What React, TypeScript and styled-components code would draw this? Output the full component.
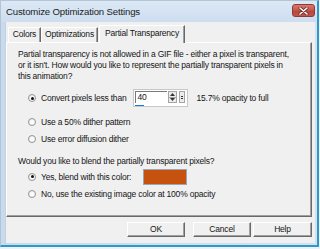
import React from 'react';
import styled, { createGlobalStyle } from 'styled-components';

const GlobalStyle = createGlobalStyle`
  html, body {
    margin: 0;
    padding: 0;
    background: #eef2f6;
  }
  * {
    box-sizing: border-box;
  }
`;

const uiFont = `"Liberation Sans", Arial, sans-serif`;

const Window = styled.div`
  width: 319px;
  height: 247px;
  display: flex;
  flex-direction: column;
  background: linear-gradient(90deg, #c9daee 0%, #d3e1f1 100%);
  border-top: 1px solid #b4c4d6;
  border-left: 1px solid #b4c4d6;
  border-right: 2px solid #2c9cc6;
  border-bottom: 2px solid #2c9cc6;
  font-family: ${uiFont};
  color: #151515;
`;

const TitleBar = styled.div`
  height: 21px;
  display: flex;
  align-items: flex-start;
  justify-content: space-between;
  padding: 0 2px 0 5px;
  background: linear-gradient(180deg, #dce8f5 0%, #cddef0 100%);
`;

const Title = styled.div`
  font-size: 9.6px;
  letter-spacing: -0.15px;
  line-height: 12px;
  margin-top: 5px;
  color: #1b1b1b;
`;

const CloseButton = styled.div`
  width: 23px;
  height: 13px;
  margin-top: 3px;
  border: 1px solid #8d3b37;
  border-radius: 3px;
  background: linear-gradient(180deg, #d8776c 0%, #c85a4e 45%, #b8463b 55%, #c0544a 100%);
  display: flex;
  align-items: center;
  justify-content: center;
`;

const Content = styled.div`
  flex: 1;
  margin: 0 2px 2px 4px;
  background: #f0f0f0;
  border-left: 1px solid #c3d2e3;
  display: flex;
  flex-direction: column;
  padding-top: 3px;
`;

const TabRow = styled.div`
  height: 17px;
  display: flex;
  align-items: flex-end;
  padding-left: 2px;
  position: relative;
  z-index: 1;
`;

const Tab = styled.div<{ $w: number; $active?: boolean }>`
  width: ${(p) => p.$w}px;
  height: ${(p) => (p.$active ? 18 : 15)}px;
  margin-bottom: ${(p) => (p.$active ? -1 : 0)}px;
  margin-left: ${(p) => (p.$active ? 1 : 0)}px;
  background: #f0f0f0;
  border-top: 1px solid #ffffff;
  border-left: 1px solid #ffffff;
  border-right: 1px solid #696969;
  box-shadow: inset -1px 0 0 #a0a0a0;
  font-size: 8.5px;
  letter-spacing: -0.2px;
  line-height: 13px;
  padding-top: ${(p) => (p.$active ? 1 : 0)}px;
  text-align: center;
  white-space: nowrap;
`;

const Panel = styled.div`
  width: 306px;
  height: 175px;
  background: #f0f0f0;
  border-top: 1px solid #ffffff;
  border-left: 1px solid #ffffff;
  border-right: 1px solid #696969;
  border-bottom: 1px solid #696969;
  box-shadow: inset -1px -1px 0 #a0a0a0;
  display: flex;
  flex-direction: column;
  font-size: 8.5px;
  letter-spacing: -0.2px;
`;

const Para = styled.div<{ $mt: number }>`
  margin-top: ${(p) => p.$mt}px;
  padding-left: 11px;
  line-height: 11px;
  white-space: nowrap;
`;

const RadioRow = styled.div<{ $mt?: number; $h?: number }>`
  display: flex;
  align-items: center;
  height: ${(p) => p.$h ?? 17}px;
  margin-top: ${(p) => p.$mt ?? 0}px;
  padding-left: 21px;
  white-space: nowrap;
`;

const Radio = styled.span<{ $on?: boolean }>`
  width: 8px;
  height: 8px;
  border-radius: 50%;
  border: 1px solid #949494;
  background: radial-gradient(circle at 60% 60%, #ffffff 0%, #f6f6f6 55%, #dadada 100%);
  display: inline-flex;
  align-items: center;
  justify-content: center;
  margin-right: 5px;
  flex-shrink: 0;

  &::after {
    content: '';
    width: 3px;
    height: 3px;
    border-radius: 50%;
    background: ${(p) => (p.$on ? '#111' : 'transparent')};
  }
`;

const SpinFrame = styled.div`
  width: 55px;
  height: 18px;
  margin-left: 7px;
  margin-right: 8px;
  border: 1px solid #c8c8c8;
  background: #ffffff;
  padding: 1px 2px 0 1px;
  display: flex;
  flex-direction: column;
`;

const SpinTop = styled.div`
  display: flex;
  height: 12px;
  gap: 1px;
`;

const SpinField = styled.div`
  flex: 1;
  border-top: 1px solid #7a7a7a;
  border-left: 1px solid #7a7a7a;
  padding-left: 1px;
  line-height: 11px;
  font-size: 8.5px;
`;

const SpinArrows = styled.div`
  width: 9px;
  display: flex;
  flex-direction: column;
`;

const ArrowBtn = styled.div`
  flex: 1;
  background: #ececec;
  border: 1px solid #a5a5a5;
  display: flex;
  align-items: center;
  justify-content: center;
  & + & {
    border-top: none;
  }
`;

const ExtraBtn = styled.div`
  width: 6px;
  margin-left: 1px;
  background: #ececec;
  border: 1px solid #a5a5a5;
  display: flex;
  flex-direction: column;
  align-items: center;
  justify-content: center;
  gap: 1px;
`;

const ExtraLine = styled.span`
  width: 2px;
  height: 1px;
  background: #333;
`;

const SpinBar = styled.div`
  width: 9px;
  height: 2px;
  margin-top: 2px;
  background: #1f7ad6;
`;

const Swatch = styled.div`
  width: 44px;
  height: 16px;
  margin-left: 12px;
  border: 1px solid #9aa6b4;
  background: #c6520f;
`;

const ButtonRow = styled.div`
  display: flex;
  justify-content: flex-end;
  gap: 2px;
  padding-right: 3px;
  margin-top: 5px;
`;

const Button = styled.div<{ $w: number; $mr?: number }>`
  width: ${(p) => p.$w}px;
  height: 15px;
  margin-right: ${(p) => p.$mr ?? 0}px;
  background: #f0f0f0;
  border-top: 1px solid #ffffff;
  border-left: 1px solid #ffffff;
  border-right: 1px solid #696969;
  border-bottom: 1px solid #696969;
  box-shadow: inset -1px -1px 0 #a0a0a0;
  font-size: 8.5px;
  letter-spacing: -0.2px;
  line-height: 13px;
  text-align: center;
`;

const Arrow = ({ up }: { up?: boolean }) => (
  <svg width="5" height="3" viewBox="0 0 5 3">
    <path d={up ? 'M0 3 L2.5 0 L5 3 Z' : 'M0 0 L2.5 3 L5 0 Z'} fill="#333" />
  </svg>
);

const App: React.FC = () => {
  return (
    <>
      <GlobalStyle />
      <Window>
        <TitleBar>
          <Title>Customize Optimization Settings</Title>
          <CloseButton>
            <svg width="11" height="8" viewBox="0 0 11 8">
              <path d="M2 1 L9 7 M9 1 L2 7" stroke="#6b2a25" strokeWidth="3" strokeLinecap="round" />
              <path d="M2 1 L9 7 M9 1 L2 7" stroke="#ffffff" strokeWidth="1.6" strokeLinecap="round" />
            </svg>
          </CloseButton>
        </TitleBar>
        <Content>
          <TabRow>
            <Tab $w={33}>Colors</Tab>
            <Tab $w={57}>Optimizations</Tab>
            <Tab $w={86} $active>Partial Transparency</Tab>
          </TabRow>
          <Panel>
            <Para $mt={6}>
              Partial transparency is not allowed in a GIF file - either a pixel is transparent,
              <br />
              or it isn't. How would you like to represent the partially transparent pixels in
              <br />
              this animation?
            </Para>
            <RadioRow $mt={7} $h={18}>
              <Radio $on />
              Convert pixels less than
              <SpinFrame>
                <SpinTop>
                  <SpinField>40</SpinField>
                  <SpinArrows>
                    <ArrowBtn>
                      <Arrow up />
                    </ArrowBtn>
                    <ArrowBtn>
                      <Arrow />
                    </ArrowBtn>
                  </SpinArrows>
                  <ExtraBtn>
                    <ExtraLine />
                    <ExtraLine />
                  </ExtraBtn>
                </SpinTop>
                <SpinBar />
              </SpinFrame>
              15.7% opacity to full
            </RadioRow>
            <RadioRow $mt={6}>
              <Radio />
              Use a 50% dither pattern
            </RadioRow>
            <RadioRow>
              <Radio />
              Use error diffusion dither
            </RadioRow>
            <Para $mt={9}>Would you like to blend the partially transparent pixels?</Para>
            <RadioRow $mt={1}>
              <Radio $on />
              Yes, blend with this color:
              <Swatch />
            </RadioRow>
            <RadioRow>
              <Radio />
              No, use the existing image color at 100% opacity
            </RadioRow>
          </Panel>
          <ButtonRow>
            <Button $w={58} $mr={6}>OK</Button>
            <Button $w={58}>Cancel</Button>
            <Button $w={59}>Help</Button>
          </ButtonRow>
        </Content>
      </Window>
    </>
  );
};

export default App;
